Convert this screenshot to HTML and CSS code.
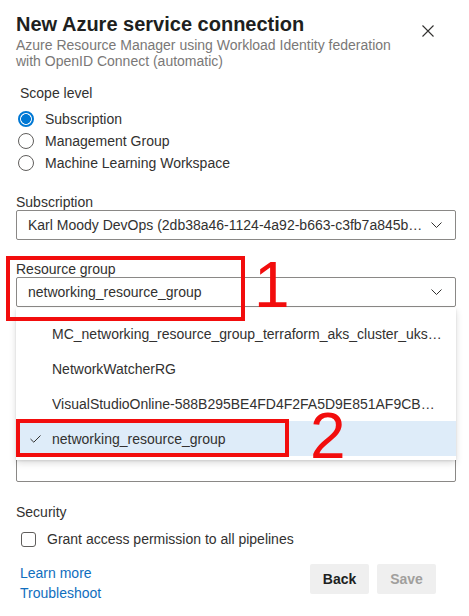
FILE: index.html
```html
<!DOCTYPE html>
<html>
<head>
<meta charset="utf-8">
<link rel="stylesheet" href="styles.css">
</head>
<body>
<div class="panel">
  <div class="header">
    <div class="titles">
      <div class="title">New Azure service connection</div>
      <div class="subtitle">Azure Resource Manager using Workload Identity federation with OpenID Connect (automatic)</div>
    </div>
    <button class="close" aria-label="Close">
      <svg width="12" height="12" viewBox="0 0 12 12"><path d="M0.5 0.5 L11.5 11.5 M11.5 0.5 L0.5 11.5" stroke="#323130" stroke-width="1.1" fill="none"/></svg>
    </button>
  </div>

  <div class="scope">
    <div class="label">Scope level</div>
    <div class="radios">
      <div class="radio-row"><span class="radio checked"></span><span>Subscription</span></div>
      <div class="radio-row"><span class="radio"></span><span>Management Group</span></div>
      <div class="radio-row"><span class="radio"></span><span>Machine Learning Workspace</span></div>
    </div>
  </div>

  <div class="field first">
    <div class="flabel">Subscription</div>
    <div class="select">
      <span class="sel-text">Karl Moody DevOps (2db38a46-1124-4a92-b663-c3fb7a845b…</span>
      <svg class="chev" width="11" height="6" viewBox="0 0 11 6"><path d="M0.5 0.5 L5.5 5.5 L10.5 0.5" stroke="#323130" stroke-width="1" fill="none"/></svg>
    </div>
  </div>

  <div class="field rg">
    <div class="flabel">Resource group</div>
    <div class="select">
      <span class="sel-text">networking_resource_group</span>
      <svg class="chev" width="11" height="6" viewBox="0 0 11 6"><path d="M0.5 0.5 L5.5 5.5 L10.5 0.5" stroke="#323130" stroke-width="1" fill="none"/></svg>
    </div>

    <div class="dropdown">
      <div class="opt"><span class="opt-text">MC_networking_resource_group_terraform_aks_cluster_uksouth</span></div>
      <div class="opt"><span class="opt-text">NetworkWatcherRG</span></div>
      <div class="opt"><span class="opt-text">VisualStudioOnline-588B295BE4FD4F2FA5D9E851AF9CBD3E-EUROPE</span></div>
      <div class="opt selected">
        <svg class="check" width="11" height="8" viewBox="0 0 11 8"><path d="M0.5 4 L3.8 7.2 L10.5 0.5" stroke="#323130" stroke-width="1" fill="none"/></svg>
        <span class="opt-text">networking_resource_group</span>
      </div>
    </div>

    <div class="mark mark1"></div>
    <div class="num num1">1</div>
    <div class="mark mark2"></div>
    <div class="num num2">2</div>
  </div>

  <div class="field">
    <div class="flabel">Service connection name</div>
    <div class="input"></div>
  </div>

  <div class="field">
    <div class="flabel">Description (optional)</div>
    <div class="input textarea"></div>
  </div>

  <div class="security">
    <div class="flabel">Security</div>
    <div class="check-row"><span class="checkbox"></span><span>Grant access permission to all pipelines</span></div>
  </div>

  <div class="footer">
    <div class="links">
      <a href="#">Learn more</a>
      <a href="#">Troubleshoot</a>
    </div>
    <div class="buttons">
      <button class="btn">Back</button>
      <button class="btn disabled">Save</button>
    </div>
  </div>
</div>
</body>
</html>
```

FILE: styles.css
```css
* { box-sizing: border-box; }
html, body { margin: 0; padding: 0; background: #fff; }
body {
  font-family: "Liberation Sans", Arial, sans-serif;
  font-size: 14px;
  color: #323130;
  width: 469px;
  height: 616px;
  overflow: hidden;
}
.panel { padding: 11px 13px 0 16px; }

.header { display: flex; align-items: flex-start; }
.titles { flex: 1; }
.title {
  font-size: 20px;
  font-weight: bold;
  line-height: 26px;
  color: #201f1e;
}
.subtitle {
  font-size: 14px;
  line-height: 16px;
  color: #7a7877;
  width: 385px;
}
.close {
  border: 0;
  background: none;
  padding: 0;
  margin: 14px 22px 0 0;
  width: 12px;
  height: 12px;
  display: flex;
}

.scope { margin-top: 14px; padding-left: 4px; }
.label { line-height: 20px; }
.radios { margin-top: 5px; }
.radio-row { display: flex; align-items: center; height: 22px; gap: 11px; }
.radio {
  width: 16px; height: 16px;
  border: 1px solid #605e5c;
  border-radius: 50%;
  margin-left: -2px;
  flex: none;
}
.radio.checked {
  border: 2px solid #0078d4;
  background: radial-gradient(circle, #0078d4 0 4.6px, #fff 5.2px);
}

.field { position: relative; margin-top: 21px; }
.field.first { margin-top: 20px; }
.flabel { line-height: 16px; }
.select, .input {
  height: 30px;
  border: 1px solid #8a8886;
  border-radius: 2px;
  display: flex;
  align-items: center;
  padding: 0 12px 0 11px;
}
.textarea { height: 71px; }
.sel-text { flex: 1; white-space: nowrap; overflow: hidden; }
.chev { flex: none; margin-left: 10px; margin-right: 1px; }

.dropdown {
  position: absolute;
  left: 0;
  top: 47px;
  width: 440px;
  background: #fff;
  padding: 8px 0 4px;
  box-shadow: 0 3px 7px rgba(0,0,0,0.14), 0 1px 2px rgba(0,0,0,0.1);
  z-index: 5;
}
.opt {
  height: 35px;
  display: flex;
  align-items: center;
  padding: 0 13px 0 36px;
  position: relative;
}
.opt-text { white-space: nowrap; overflow: hidden; text-overflow: ellipsis; }
.opt.selected { background: #deecf9; }
.check { position: absolute; left: 14px; top: 14px; }

.mark {
  position: absolute;
  border: 4px solid #f20d0d;
  z-index: 10;
}
.mark1 { left: -10px; top: -5px; width: 239px; height: 65px; }
.mark2 { left: 0; top: 158px; width: 273px; height: 38px; }
.num {
  position: absolute;
  font-family: "Liberation Sans", Arial, sans-serif;
  font-size: 64px;
  line-height: 64px;
  color: #f20d0d;
  z-index: 10;
}
.num1 { left: 238px; top: -8px; }
.num2 { left: 294px; top: 143px; }

.security { margin-top: 22px; }
.check-row {
  display: flex;
  align-items: center;
  height: 20px;
  margin-top: 9px;
  padding-left: 5px;
  gap: 11px;
}
.checkbox {
  width: 15px; height: 15px;
  border: 1px solid #605e5c;
  border-radius: 3px;
  flex: none;
}

.footer {
  display: flex;
  justify-content: space-between;
  margin-top: 13px;
  padding: 0 20px 0 4px;
}
.links { display: flex; flex-direction: column; margin-top: 1px; }
.links a {
  color: #106ebe;
  text-decoration: none;
  line-height: 20px;
}
.buttons { display: flex; gap: 8px; margin-top: 2px; }
.btn {
  width: 59px;
  height: 30px;
  border: 0;
  border-radius: 2px;
  background: #efefef;
  font-family: "Liberation Sans", Arial, sans-serif;
  font-size: 14px;
  font-weight: bold;
  color: #201f1e;
  padding: 0;
}
.btn.disabled { color: #a19f9d; }
```
